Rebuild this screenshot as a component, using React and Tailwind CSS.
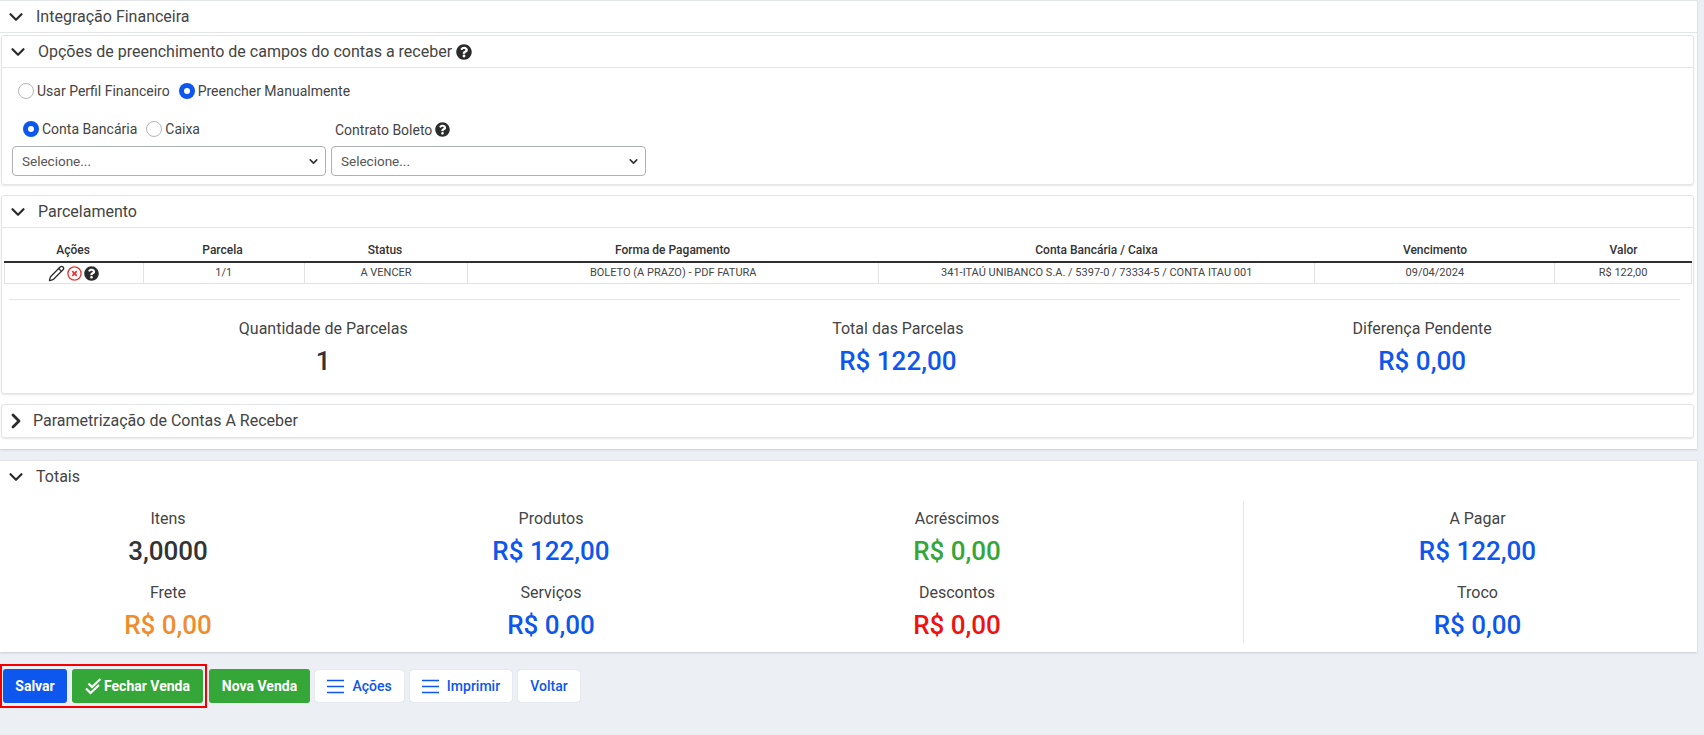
import { ChevronDown, ChevronRight, Pencil } from 'lucide-react';
import { FaQuestionCircle } from 'react-icons/fa';

function PanelHeader({ title, open = true, help = false, pad = 'pl-[5px]', gap = 'gap-[9px]', border = true }) {
  const Icon = open ? ChevronDown : ChevronRight;
  return (
    <div className={`flex items-center h-[32px] ${pad} ${gap} ${border ? 'border-b border-[#e3e5e8]' : ''}`}>
      <Icon size={open ? 22 : 24} strokeWidth={open ? 2.4 : 2.8} className="text-[#2b2b2b] shrink-0" />
      <span className="text-[16px] text-[#444] leading-none">{title}</span>
      {help && <FaQuestionCircle size={16} className="text-[#2b2b2b] -ml-[5px]" />}
    </div>
  );
}

function Radio({ checked, label }) {
  return (
    <label className="flex items-center gap-[3px] text-[14px] text-[#444] leading-none">
      {checked ? (
        <span className="w-[16px] h-[16px] rounded-full bg-[#0d56ee] flex items-center justify-center">
          <span className="w-[6px] h-[6px] rounded-full bg-white" />
        </span>
      ) : (
        <span className="w-[16px] h-[16px] rounded-full border border-[#b5b5b5] bg-white" />
      )}
      {label}
    </label>
  );
}

function FakeSelect({ className = '' }) {
  return (
    <div className={`h-[30px] border border-[#adb0b4] rounded-[4px] bg-white flex items-center justify-between pl-[9px] pr-[5px] text-[13.5px] text-[#555] ${className}`}>
      Selecione...
      <ChevronDown size={13} strokeWidth={3} className="text-[#333]" />
    </div>
  );
}

function Stat({ label, value, color = 'text-[#333]' }) {
  return (
    <div className="flex flex-col items-center">
      <span className="text-[16px] leading-[20px] text-[#444]">{label}</span>
      <span className={`text-[26px] ${color} font-medium leading-[44px]`}>{value}</span>
    </div>
  );
}

const cols = ['w-[138px]', 'w-[161px]', 'w-[164px]', 'w-[411px]', 'w-[437px]', 'w-[240px]', 'w-[137px]'];
const heads = ['Ações', 'Parcela', 'Status', 'Forma de Pagamento', 'Conta Bancária / Caixa', 'Vencimento', 'Valor'];
const cells = [null, '1/1', 'A VENCER', 'BOLETO (A PRAZO) - PDF FATURA', '341-ITAÚ UNIBANCO S.A. / 5397-0 / 73334-5 / CONTA ITAU 001', '09/04/2024', 'R$ 122,00'];

function RemoveIcon() {
  return (
    <svg width="15" height="15" viewBox="0 0 15 15" fill="none" stroke="#e23b3b" className="shrink-0">
      <circle cx="7.5" cy="7.5" r="6.6" strokeWidth="1.4" />
      <path d="M5.2 5.2l4.6 4.6M9.8 5.2l-4.6 4.6" strokeWidth="1.8" />
    </svg>
  );
}

function ParcelasTable() {
  return (
    <div className="ml-[2px] mt-[13px] w-[1688px]">
      <div className="flex h-[20px] border-b-[2px] border-[#2f2f2f] box-content">
        {heads.map((h, i) => (
          <div key={h} className={`${cols[i]} text-center text-[12px] font-medium text-[#333] leading-[18px]`}>{h}</div>
        ))}
      </div>
      <div className="flex h-[21px] border-b border-l border-r border-[#e2e2e2]">
        {cells.map((c, i) => (
          <div key={i} className={`${cols[i]} ${i > 0 ? 'border-l border-[#e2e2e2]' : ''} flex items-center justify-center text-[11px] text-[#444]`}>
            {c || (
              <span className="flex items-center gap-[2px]">
                <Pencil size={17} strokeWidth={1.8} className="text-[#2b2b2b]" />
                <RemoveIcon />
                <FaQuestionCircle size={15} className="text-[#2b2b2b]" />
              </span>
            )}
          </div>
        ))}
      </div>
    </div>
  );
}

function ActionButton({ className = '', children }) {
  return (
    <button className={`h-[32px] bg-white rounded-[3px] shadow-[0_0_1px_rgba(0,0,0,0.25)] flex items-center justify-center gap-[8px] text-[14px] font-medium text-[#0d56ee] ${className}`}>
      {children}
    </button>
  );
}

function BarsIcon() {
  return (
    <svg width="17" height="15" viewBox="0 0 17 15" className="shrink-0">
      <path d="M0 1.5h17M0 7.5h17M0 13.5h17" stroke="#0d56ee" strokeWidth="1.6" />
    </svg>
  );
}

function DoubleCheck() {
  return (
    <svg width="17" height="17" viewBox="0 0 17 17" fill="none" stroke="white" strokeWidth="2.2" className="shrink-0">
      <path d="M3.5 5.5l3.5 3.5L15.5 1" />
      <path d="M1 10.5l4.5 4.5L14 7" />
    </svg>
  );
}

export default function App() {
  return (
    <div className="w-[1704px] h-[735px] bg-[#eceff4] overflow-hidden font-['Roboto',sans-serif]">
      <div className="w-[1697px] h-[449px] bg-white border-t border-[#e3e5e8] shadow-[0_1px_2px_rgba(0,0,0,0.15)]">
        <PanelHeader title="Integração Financeira" />
        <div className="ml-[1px] w-[1693px] mt-[2px] h-[150px] border border-[#e3e5e8] rounded-[3px] shadow-[0_1px_2px_rgba(0,0,0,0.1)]">
          <PanelHeader title="Opções de preenchimento de campos do contas a receber" help />
          <div className="flex gap-[9px] pl-[16px] pt-[15px]">
            <Radio label="Usar Perfil Financeiro" />
            <Radio checked label="Preencher Manualmente" />
          </div>
          <div className="flex gap-[5px] pl-[10px] mt-[19px]">
            <div className="w-[314px]">
              <div className="flex gap-[9px] pl-[11px] h-[22px]">
                <Radio checked label="Conta Bancária" />
                <Radio label="Caixa" />
              </div>
              <FakeSelect className="mt-[6px]" />
            </div>
            <div className="w-[315px]">
              <div className="flex items-center gap-[3px] pl-[4px] h-[25px] text-[14px] text-[#444]">
                Contrato Boleto
                <FaQuestionCircle size={15} className="text-[#2b2b2b] -mt-[3px]" />
              </div>
              <FakeSelect className="mt-[3px]" />
            </div>
          </div>
        </div>
        <div className="ml-[1px] w-[1693px] mt-[10px] h-[199px] border border-[#e3e5e8] rounded-[3px] shadow-[0_1px_2px_rgba(0,0,0,0.1)]">
          <PanelHeader title="Parcelamento" />
          <ParcelasTable />
          <div className="ml-[7px] mt-[15px] border-t border-[#e3e5e8] w-[1671px]" />
          <div className="flex mt-[19px]">
            <div className="w-[644px] flex justify-center"><Stat label="Quantidade de Parcelas" value="1" /></div>
            <div className="w-[508px] flex justify-center"><Stat label="Total das Parcelas" value="R$ 122,00" color="text-[#0d56ee]" /></div>
            <div className="w-[543px] flex justify-center"><Stat label="Diferença Pendente" value="R$ 0,00" color="text-[#0d56ee]" /></div>
          </div>
        </div>
        <div className="ml-[1px] w-[1693px] mt-[10px] border border-[#e3e5e8] rounded-[3px] shadow-[0_1px_2px_rgba(0,0,0,0.1)]">
          <PanelHeader title="Parametrização de Contas A Receber" open={false} border={false} pad="pl-[2px]" gap="gap-[5px]" />
        </div>
      </div>

      <div className="w-[1697px] h-[192px] mt-[11px] bg-white border-t border-[#e3e5e8] shadow-[0_1px_2px_rgba(0,0,0,0.15)]">
        <PanelHeader title="Totais" border={false} />
        <div className="flex mt-[9px]">
          <div className="w-[1243px] h-[141px] grid grid-cols-[336px_430px_382px] gap-y-[10px] content-start pt-[7px]">
            <Stat label="Itens" value="3,0000" />
            <Stat label="Produtos" value="R$ 122,00" color="text-[#0d56ee]" />
            <Stat label="Acréscimos" value="R$ 0,00" color="text-[#35a638]" />
            <Stat label="Frete" value="R$ 0,00" color="text-[#f08c2e]" />
            <Stat label="Serviços" value="R$ 0,00" color="text-[#0d56ee]" />
            <Stat label="Descontos" value="R$ 0,00" color="text-[#f01111]" />
          </div>
          <div className="w-[454px] h-[141px] border-l border-[#e3e5e8] flex flex-col gap-[10px] pt-[7px] pl-[14px]">
            <Stat label="A Pagar" value="R$ 122,00" color="text-[#0d56ee]" />
            <Stat label="Troco" value="R$ 0,00" color="text-[#0d56ee]" />
          </div>
        </div>
      </div>

      <div className="flex items-center gap-[5px] mt-[17px] pl-[3px]">
        <div className="relative flex gap-[5px]">
          <div className="absolute -left-[3px] -top-[5px] w-[207px] h-[44px] border-[2px] border-[#f50000]" />
          <button className="h-[34px] w-[64px] rounded-[3px] bg-[#0d56ee] text-white text-[14px] font-bold">Salvar</button>
          <button className="h-[34px] w-[131px] rounded-[3px] bg-[#35a638] text-white text-[14px] font-bold flex items-center justify-center gap-[2px]"><DoubleCheck />Fechar Venda</button>
        </div>
        <button className="h-[34px] w-[101px] ml-[1px] rounded-[3px] bg-[#35a638] text-white text-[14px] font-bold">Nova Venda</button>
        <ActionButton className="w-[89px]"><BarsIcon />Ações</ActionButton>
        <ActionButton className="w-[102px] ml-[1px]"><BarsIcon />Imprimir</ActionButton>
        <ActionButton className="w-[62px] ml-[1px]">Voltar</ActionButton>
      </div>
    </div>
  );
}
